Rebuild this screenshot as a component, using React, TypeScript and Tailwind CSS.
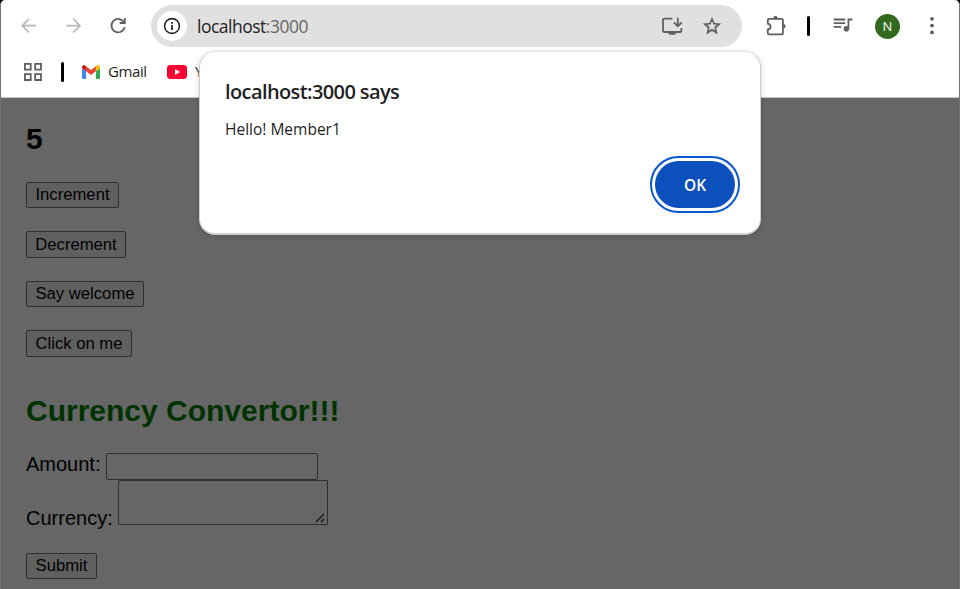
import type { ReactNode } from "react";

const PageButton = ({ children, className }: { children: ReactNode; className: string }) => (
  <button
    type="button"
    className={`block shrink-0 whitespace-nowrap rounded-[2px] border border-[#2f2f2f] bg-[#606060] text-center text-[16.67px] leading-[24px] text-black ${className}`}
  >
    {children}
  </button>
);

const BackIcon = () => (
  <svg className="h-6 w-6" viewBox="0 0 24 24" fill="none" stroke="#b8b8b8" strokeWidth="1.7">
    <path d="M20 11.7H6.5M13 4.9 6.2 11.7l6.8 6.8" />
  </svg>
);

const ForwardIcon = () => (
  <svg className="h-6 w-6" viewBox="0 0 24 24" fill="none" stroke="#b8b8b8" strokeWidth="1.7">
    <path d="M5.2 11.7h13.5M12.2 4.9 19 11.7l-6.8 6.8" />
  </svg>
);

const ReloadIcon = () => (
  <svg className="h-6 w-6" viewBox="0 0 24 24" fill="none" stroke="#5f5f5f" strokeWidth="1.8">
    <path d="M18.2 8.7A6.7 6.7 0 1 0 18.7 13.1M18.8 4.1v4.9h-5.1" />
  </svg>
);

const InfoIcon = () => (
  <svg className="h-[18px] w-[18px]" viewBox="0 0 18 18" fill="none" stroke="#262626" strokeWidth="1.6">
    <circle cx="9" cy="9" r="7.4" />
    <path d="M9 8v5M9 5v1.7" strokeWidth="1.8" />
  </svg>
);

const InstallIcon = () => (
  <svg className="h-6 w-6" viewBox="0 0 24 24" fill="none" stroke="#5f5f5f" strokeWidth="1.8">
    <path d="M12.3 4.6H4.6a1.6 1.6 0 0 0-1.6 1.6v10.2A1.6 1.6 0 0 0 4.6 18h15.2a1.6 1.6 0 0 0 1.6-1.6v-2.5" />
    <path d="M17.8 3.8v8.4M14 8.5l3.8 3.8 3.8-3.8" />
    <path d="M8.7 19.4h6.9" strokeWidth="2.6" />
  </svg>
);

const StarIcon = () => (
  <svg className="h-6 w-6" viewBox="0 0 24 24" fill="#5f5f5f">
    <path d="m12 2.9-2.6 6.2-6.6.5 5.1 4.3-1.6 6.5 5.7-3.4 5.7 3.4-1.6-6.5 5.1-4.3-6.6-.5L12 2.9Zm0 4.2 1.4 3.3 3.6.3-2.7 2.4.8 3.5L12 14.7l-3.1 1.9.8-3.5L7 10.7l3.6-.3L12 7.1Z" />
  </svg>
);

const ExtensionIcon = () => (
  <svg className="h-6 w-6" viewBox="0 0 24 24" fill="none" stroke="#5f5f5f" strokeWidth="1.8">
    <path d="M4.7 4.9h13.1c.7 0 1.1.4 1.1 1.1v13.2c0 .7-.4 1.1-1.1 1.1H4.9c-.7 0-1.1-.4-1.1-1.1v-3.7c3.7-.7 3.7-5 0-5.8v-4c0-.5.4-.8.9-.8Z" />
    <path d="M9.2 4.4a2.3 2.3 0 0 1 4.6 0ZM19.3 9.9a2.3 2.3 0 0 1 0 4.6Z" fill="#5f5f5f" stroke="none" />
  </svg>
);

const MediaIcon = () => (
  <svg className="h-6 w-6" viewBox="0 0 24 24" fill="none" stroke="#5f5f5f" strokeWidth="1.8">
    <path d="M2.7 5.5h11.5M2.7 9.2h11.5M2.7 12.9h7.5M17.4 14.3V5.5h4.1" />
    <circle cx="15.4" cy="14.7" r="2.8" fill="#5f5f5f" stroke="none" />
  </svg>
);

const MoreIcon = () => (
  <svg className="h-6 w-6" viewBox="0 0 24 24" fill="#5f5f5f">
    <circle cx="12" cy="4.8" r="1.9" />
    <circle cx="12" cy="11.6" r="1.9" />
    <circle cx="12" cy="18.4" r="1.9" />
  </svg>
);

const AppsIcon = () => (
  <svg className="h-[18px] w-[18px]" viewBox="0 0 18 18" fill="none" stroke="#5f5f5f" strokeWidth="1.8">
    <path d="M.9.9h5.8v5.8H.9zM11.2.9H17v5.8h-5.8zM.9 11.2h5.8V17H.9zM11.2 11.2H17V17h-5.8z" />
  </svg>
);

const GmailIcon = () => (
  <svg className="h-[14px] w-[18px]" viewBox="0 0 18 14">
    <path d="M0 3.2 4.1 6.2V14H1.3A1.3 1.3 0 0 1 0 12.7Z" fill="#4285f4" />
    <path d="M18 3.2 13.9 6.2V14h2.8a1.3 1.3 0 0 0 1.3-1.3Z" fill="#34a853" />
    <path d="M4.1 1.2 9 4.9l4.9-3.7v5.1L9 10 4.1 6.3Z" fill="#ea4335" />
    <path d="M0 2a2 2 0 0 1 3.2-1.5l.9.7v5.1L0 3.2Z" fill="#c5221f" />
    <path d="M18 2A2 2 0 0 0 14.8.5l-.9.7v5.1L18 3.2Z" fill="#fbbc04" />
  </svg>
);

const YoutubeIcon = () => (
  <svg className="h-[14px] w-5" viewBox="0 0 20 14">
    <rect width="20" height="14" rx="3.4" fill="#ff0033" />
    <path d="m8 4 5.2 3L8 10Z" fill="#fff" />
  </svg>
);

export default function App() {
  return (
    <div className="relative h-[589px] w-[960px] overflow-hidden bg-black font-['Open_Sans',sans-serif]">
      <div className="flex h-full flex-col overflow-hidden rounded-t-[5px] border-x border-[#737373] bg-white">
        <header className="h-[97px] shrink-0">
          <div className="flex h-[52px] items-center">
            <div className="ml-[15px] flex gap-[21px]">
              <BackIcon />
              <ForwardIcon />
              <ReloadIcon />
            </div>
            <div className="ml-[21px] flex h-[42px] w-[591px] items-center rounded-full bg-[#e0e0e0]">
              <div className="ml-1.5 flex h-[30px] w-[30px] items-center justify-center rounded-full bg-white">
                <InfoIcon />
              </div>
              <div className="ml-[10px] w-[130px] whitespace-nowrap text-[17.5px] tracking-[-0.5px] text-[#1f1f1f]">
                localhost<span className="text-[#666]">:3000</span>
              </div>
              <div className="ml-auto mr-[18px] flex gap-4">
                <InstallIcon />
                <StarIcon />
              </div>
            </div>
            <div className="ml-[22px]">
              <ExtensionIcon />
            </div>
            <div className="ml-[19px] h-5 w-[3px] rounded-full bg-black" />
            <div className="ml-[21px]">
              <MediaIcon />
            </div>
            <div className="ml-[20px] flex h-[25px] w-[25px] items-center justify-center rounded-full bg-[#33691e] pt-px text-[13px] text-white">
              N
            </div>
            <div className="ml-[20px]">
              <MoreIcon />
            </div>
          </div>
          <div className="flex h-[40px] items-center whitespace-nowrap text-[15px] tracking-[-0.4px] text-[#1f1f1f]">
            <div className="ml-[23px]">
              <AppsIcon />
            </div>
            <div className="ml-[19px] h-5 w-[3px] rounded-full bg-black" />
            <div className="ml-[18px]">
              <GmailIcon />
            </div>
            <span className="ml-[8px] w-[40px] pb-0.5">Gmail</span>
            <div className="ml-[19px]">
              <YoutubeIcon />
            </div>
            <span className="ml-2 pb-0.5">Y</span>
          </div>
        </header>

        <main className="flex flex-1 flex-col items-start border-t border-[#c4c4c4] bg-[#666] pl-[25px] font-['Liberation_Sans',Arial,sans-serif] text-black">
          <h1 className="mt-[24px] h-[34px] text-[30px] font-bold leading-[34px]">5</h1>
          <PageButton className="mt-[26px] h-[26px] w-[93px]">Increment</PageButton>
          <PageButton className="mt-[23px] h-[27px] w-[100px]">Decrement</PageButton>
          <PageButton className="mt-[23px] h-[26px] w-[118px]">Say welcome</PageButton>
          <PageButton className="mt-[23px] h-[27px] w-[106px]">Click on me</PageButton>
          <h1 className="mt-[37px] h-[34px] whitespace-nowrap text-[30px] font-bold leading-[34px] text-[#003300]">
            Currency Convertor!!!
          </h1>
          <label className="mt-[25px] flex h-[27px] text-[20px] leading-[23px]">
            <span className="w-[80px]">Amount:</span>
            <input className="h-[27px] w-[212px] rounded-[2px] border border-[#2f2f2f] bg-[#666]" />
          </label>
          <label className="flex h-[45px] text-[20px] leading-[23px]">
            <span className="w-[92px] pt-[27px]">Currency:</span>
            <span className="flex h-[45px] w-[210px] items-end justify-end rounded-[1px] border border-[#2f2f2f]">
              <svg className="mb-px mr-0.5 h-[10px] w-[10px]" viewBox="0 0 10 10" stroke="#1c1c1c" strokeWidth="1.6">
                <path d="M1 9 9 1M6 9l3-3" />
              </svg>
            </span>
          </label>
          <PageButton className="mt-[28px] h-[26px] w-[71px]">Submit</PageButton>
        </main>
      </div>

      <section
        role="dialog"
        className="absolute left-[199px] top-[51px] flex h-[184px] w-[562px] flex-col rounded-[16px] border border-b-2 border-[#d0d0d0] border-t-[#e4e4e4] bg-white pl-[25px] pt-[25px] text-[#1f1f1f] shadow-[0_1px_5px_rgba(0,0,0,0.2)]"
      >
        <h2 className="h-[30px] whitespace-nowrap text-[20px] font-semibold leading-[30px] tracking-[-0.6px]">
          localhost:3000 says
        </h2>
        <p className="mt-[10px] h-6 whitespace-nowrap text-[15.5px] leading-[24px]">Hello! Member1</p>
        <button
          type="button"
          className="ml-auto mr-[20px] mt-[15px] flex h-[57px] w-[90px] items-center justify-center rounded-full border-2 border-[#0b57d0] bg-white p-[3px]"
        >
          <span className="flex h-full w-full items-center justify-center rounded-full bg-[#0b50bd] pt-[3px] text-[15.5px] font-semibold text-white">
            OK
          </span>
        </button>
      </section>
    </div>
  );
}
